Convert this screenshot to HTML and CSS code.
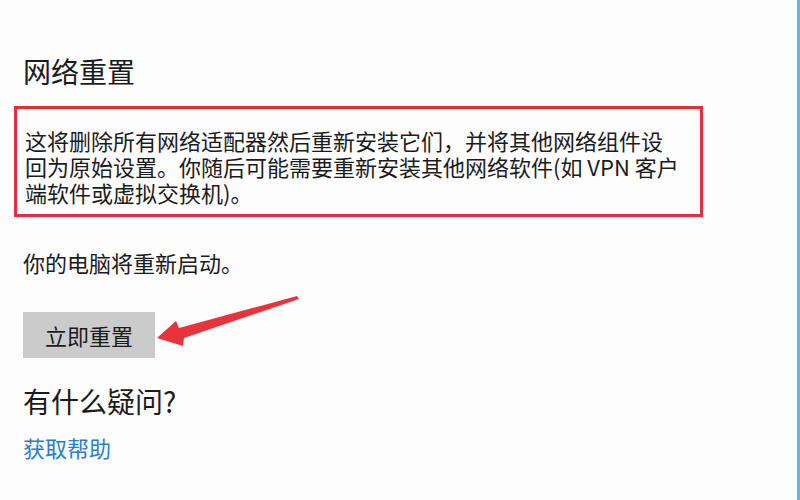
FILE: index.html
```html
<!DOCTYPE html>
<html lang="zh-CN">
<head>
<meta charset="utf-8">
<title>网络重置</title>
<link rel="stylesheet" href="styles.css">
</head>
<body>
<div class="page">
  <div class="content">
    <h2 class="title">网络重置</h2>
    <div class="notice">
      <p>这将删除所有网络适配器然后重新安装它们，并将其他网络组件设<br>回为原始设置。你随后可能需要重新安装其他网络软件(如 VPN 客户<br>端软件或虚拟交换机)。</p>
    </div>
    <p class="restart">你的电脑将重新启动。</p>
    <button class="reset-btn" type="button">立即重置</button>
    <h2 class="question">有什么疑问?</h2>
    <a class="help" href="#">获取帮助</a>
  </div>
  <svg class="arrow" width="800" height="500" viewBox="0 0 800 500" aria-hidden="true">
    <polygon points="157,338 176,321 179,328 297,296 299,299 184,338 183,346" fill="#e8333b"/>
  </svg>
</div>
</body>
</html>
```
FILE: styles.css
```css
html, body {
  margin: 0;
  padding: 0;
  background: #fdfdfd;
}
.page {
  position: relative;
  width: 800px;
  height: 500px;
  box-sizing: border-box;
  border-right: 3px solid #7aaadb;
  overflow: hidden;
  font-family: "Noto Sans CJK SC", "Noto Sans", sans-serif;
  color: #1b1b1b;
}
.content {
  display: flex;
  flex-direction: column;
  align-items: flex-start;
  padding: 54px 0 0 23px;
}
.title, .question {
  margin: 0;
  font-size: 28px;
  line-height: 34px;
  font-weight: 400;
}
.notice {
  margin: 18px 0 0 -9px;
  width: 689px;
  box-sizing: border-box;
  border: 3px solid #e2303a;
  padding: 18px 8px 9px 8px;
}
.notice p {
  margin: 0;
  font-size: 22px;
  line-height: 26px;
  white-space: nowrap;
}
.restart {
  margin: 32px 0 0 0;
  font-size: 22px;
  line-height: 26px;
}
.reset-btn {
  margin-top: 37px;
  width: 132px;
  height: 46px;
  border: 0;
  padding: 0;
  background: #cbcbcb;
  font-family: inherit;
  font-size: 22px;
  color: #1b1b1b;
}
.question {
  margin-top: 26px;
}
.help {
  margin-top: 16px;
  font-size: 22px;
  line-height: 26px;
  color: #2a7ccc;
  text-decoration: none;
}
.arrow {
  position: absolute;
  left: 0;
  top: 0;
}
```
